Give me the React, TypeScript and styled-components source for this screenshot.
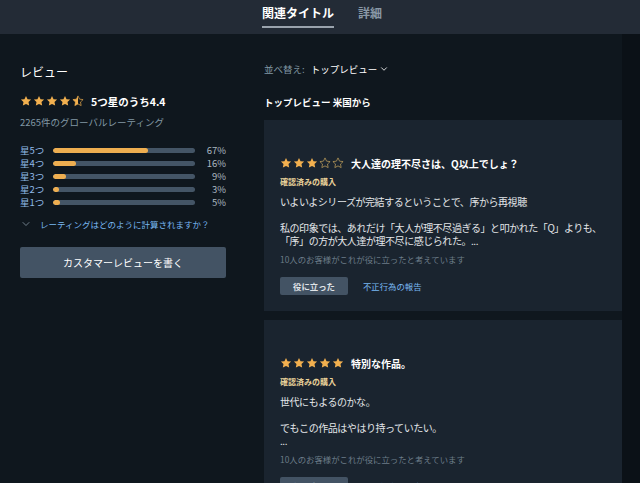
import styled, { createGlobalStyle } from 'styled-components'
import { ChevronDown } from 'lucide-react'

const GlobalStyle = createGlobalStyle`
  html, body {
    margin: 0;
    padding: 0;
    background: #0f171e;
    overflow: hidden;
  }
  body {
    font-family: "Noto Sans CJK JP", "Noto Sans", sans-serif;
    color: #fff;
  }
`

const STAR = 'M12 1.8l3.1 6.5 7.1.9-5.2 4.9 1.3 7.1L12 17.8l-6.3 3.4 1.3-7.1L1.8 9.2l7.1-.9L12 1.8z'

type StarKind = 'full' | 'half' | 'empty'

function Star({ kind, size, id }: { kind: StarKind; size: number; id: string }) {
  return (
    <svg width={size} height={size} viewBox="0 0 24 24">
      <defs>
        <clipPath id={id}>
          <rect x="0" y="0" width="12" height="24" />
        </clipPath>
      </defs>
      {kind === 'empty' ? (
        <path d={STAR} fill="none" stroke="#c9a65e" strokeWidth="1.4" strokeLinejoin="round" />
      ) : kind === 'half' ? (
        <>
          <path d={STAR} fill="none" stroke="#e8a94a" strokeWidth="1.4" strokeLinejoin="round" />
          <path d={STAR} fill="#f2b04f" clipPath={`url(#${id})`} />
        </>
      ) : (
        <path d={STAR} fill="#f2b04f" />
      )}
    </svg>
  )
}

function Stars({ kinds, size, name }: { kinds: StarKind[]; size: number; name: string }) {
  return (
    <StarRow>
      {kinds.map((k, i) => (
        <Star key={i} kind={k} size={size} id={`${name}-${i}`} />
      ))}
    </StarRow>
  )
}

const StarRow = styled.span`
  display: inline-flex;
  gap: 1px;
  align-items: center;
`

const Header = styled.header`
  height: 34px;
  background: #232b36;
  display: flex;
  justify-content: center;
  align-items: flex-start;
  gap: 24px;
  padding-left: 4px;
  box-sizing: border-box;
`

const Tab = styled.div<{ $active?: boolean }>`
  font-size: 12px;
  font-weight: 700;
  line-height: 14px;
  padding-top: 6px;
  padding-bottom: 6px;
  color: ${(p) => (p.$active ? '#ffffff' : '#8a98a6')};
  border-bottom: 2px solid ${(p) => (p.$active ? '#9aa3ad' : 'transparent')};
`

const Main = styled.div`
  display: grid;
  grid-template-columns: 264px 358px 1fr;
  height: 449px;
`

const Left = styled.section`
  padding: 28px 0 0 20px;
  width: 206px;
`

const Right = styled.section`
  padding-top: 28px;
`

const Gutter = styled.div`
  background: #0b1117;
`

const Heading = styled.h2`
  margin: 0;
  font-size: 12px;
  font-weight: 400;
  line-height: 20px;
  color: #fff;
`

const Summary = styled.div`
  display: flex;
  align-items: center;
  gap: 7px;
  margin-top: 12px;
  height: 14px;
`

const SummaryText = styled.span`
  font-size: 10.5px;
  font-weight: 700;
  color: #fff;
`

const Muted = styled.div`
  margin-top: 7px;
  font-size: 9.5px;
  line-height: 14px;
  color: #8197a4;
`

const Bars = styled.div`
  display: flex;
  flex-direction: column;
  margin-top: 14px;
`

const BarRow = styled.div`
  display: grid;
  grid-template-columns: 33px 142px 1fr;
  align-items: center;
  height: 13px;
  font-size: 9.5px;
`

const BarLabel = styled.span`
  color: #8fb9e6;
`

const Track = styled.div`
  height: 5px;
  border-radius: 3px;
  background: #445566;
  overflow: hidden;
`

const Fill = styled.div`
  height: 100%;
  border-radius: 3px;
  background: #eeae50;
`

const Pct = styled.span`
  text-align: right;
  color: #aab6c0;
`

const HowLink = styled.div`
  display: flex;
  align-items: center;
  gap: 8px;
  margin-top: 10px;
  font-size: 8.5px;
  color: #79b8f3;
  svg {
    color: #8fa0ad;
  }
`

const WideButton = styled.button`
  display: block;
  width: 206px;
  height: 31px;
  margin-top: 17px;
  border: none;
  border-radius: 2px;
  background: #435364;
  color: #fff;
  font-family: inherit;
  font-size: 10px;
`

const Sort = styled.div`
  display: flex;
  align-items: center;
  gap: 6px;
  font-size: 9.5px;
  line-height: 14px;
`

const SortLabel = styled.span`
  color: #8197a4;
`

const SortValue = styled.span`
  display: inline-flex;
  align-items: center;
  gap: 2px;
  color: #fff;
`

const ListTitle = styled.h3`
  margin: 19px 0 0;
  font-size: 9.5px;
  font-weight: 700;
  line-height: 14px;
  color: #fff;
`

const Card = styled.article`
  background: #1a242f;
  padding: 36px 16px 16px;
  margin-top: 11px;
  & + & {
    margin-top: 9px;
  }
`

const CardHead = styled.div`
  display: flex;
  align-items: center;
  gap: 7px;
  height: 14px;
`

const CardTitle = styled.span`
  font-size: 10px;
  font-weight: 700;
  color: #fff;
`

const Verified = styled.div`
  margin-top: 6px;
  font-size: 8px;
  font-weight: 700;
  line-height: 11px;
  color: #ead39a;
`

const Body = styled.div`
  margin-top: 8px;
  font-size: 10px;
  line-height: 13px;
  letter-spacing: -0.45px;
  color: #e3e6e9;
  white-space: nowrap;
  p {
    margin: 0;
  }
  p + p {
    margin-top: 13px;
  }
`

const Helpful = styled.div`
  margin-top: 6px;
  font-size: 8.4px;
  line-height: 12px;
  color: #6d7d89;
`

const Actions = styled.div`
  display: flex;
  align-items: center;
  gap: 15px;
  margin-top: 12px;
`

const SmallButton = styled.button`
  width: 68px;
  height: 18px;
  border: none;
  border-radius: 2px;
  background: #435364;
  color: #e0e4e8;
  font-family: inherit;
  font-size: 8.4px;
  font-weight: 700;
  padding: 0;
`

const ReportLink = styled.span`
  font-size: 8.4px;
  color: #79b8f3;
`

const ratings = [
  { label: '星5つ', pct: 67 },
  { label: '星4つ', pct: 16 },
  { label: '星3つ', pct: 9 },
  { label: '星2つ', pct: 3 },
  { label: '星1つ', pct: 5 },
]

const reviews = [
  {
    stars: ['full', 'full', 'full', 'empty', 'empty'] as StarKind[],
    title: '大人達の理不尽さは、Q以上でしょ？',
    paragraphs: [
      ['いよいよシリーズが完結するということで、序から再視聴'],
      ['私の印象では、あれだけ「大人が理不尽過ぎる」と叩かれた「Q」よりも、', '「序」の方が大人達が理不尽に感じられた。...'],
    ],
  },
  {
    stars: ['full', 'full', 'full', 'full', 'full'] as StarKind[],
    title: '特別な作品。',
    paragraphs: [['世代にもよるのかな。'], ['でもこの作品はやはり持っていたい。', '...']],
  },
]

export default function App() {
  return (
    <>
      <GlobalStyle />
      <Header>
        <Tab $active>関連タイトル</Tab>
        <Tab>詳細</Tab>
      </Header>
      <Main>
        <Left>
          <Heading>レビュー</Heading>
          <Summary>
            <Stars kinds={['full', 'full', 'full', 'full', 'half']} size={12} name="sum" />
            <SummaryText>5つ星のうち4.4</SummaryText>
          </Summary>
          <Muted>2265件のグローバルレーティング</Muted>
          <Bars>
            {ratings.map((r) => (
              <BarRow key={r.label}>
                <BarLabel>{r.label}</BarLabel>
                <Track>
                  <Fill style={{ width: `${Math.max(r.pct, 4)}%` }} />
                </Track>
                <Pct>{r.pct}%</Pct>
              </BarRow>
            ))}
          </Bars>
          <HowLink>
            <ChevronDown size={12} strokeWidth={1.5} />
            レーティングはどのように計算されますか？
          </HowLink>
          <WideButton>カスタマーレビューを書く</WideButton>
        </Left>
        <Right>
          <Sort>
            <SortLabel>並べ替え:</SortLabel>
            <SortValue>
              トップレビュー
              <ChevronDown size={10} strokeWidth={2} />
            </SortValue>
          </Sort>
          <ListTitle>トップレビュー 米国から</ListTitle>
          {reviews.map((rv, i) => (
            <Card key={i}>
              <CardHead>
                <Stars kinds={rv.stars} size={12} name={`rv${i}`} />
                <CardTitle>{rv.title}</CardTitle>
              </CardHead>
              <Verified>確認済みの購入</Verified>
              <Body>
                {rv.paragraphs.map((lines, j) => (
                  <p key={j}>
                    {lines.map((l, k) => (
                      <span key={k}>
                        {k > 0 && <br />}
                        {l}
                      </span>
                    ))}
                  </p>
                ))}
              </Body>
              <Helpful>10人のお客様がこれが役に立ったと考えています</Helpful>
              <Actions>
                <SmallButton>役に立った</SmallButton>
                <ReportLink>不正行為の報告</ReportLink>
              </Actions>
            </Card>
          ))}
        </Right>
        <Gutter />
      </Main>
    </>
  )
}
